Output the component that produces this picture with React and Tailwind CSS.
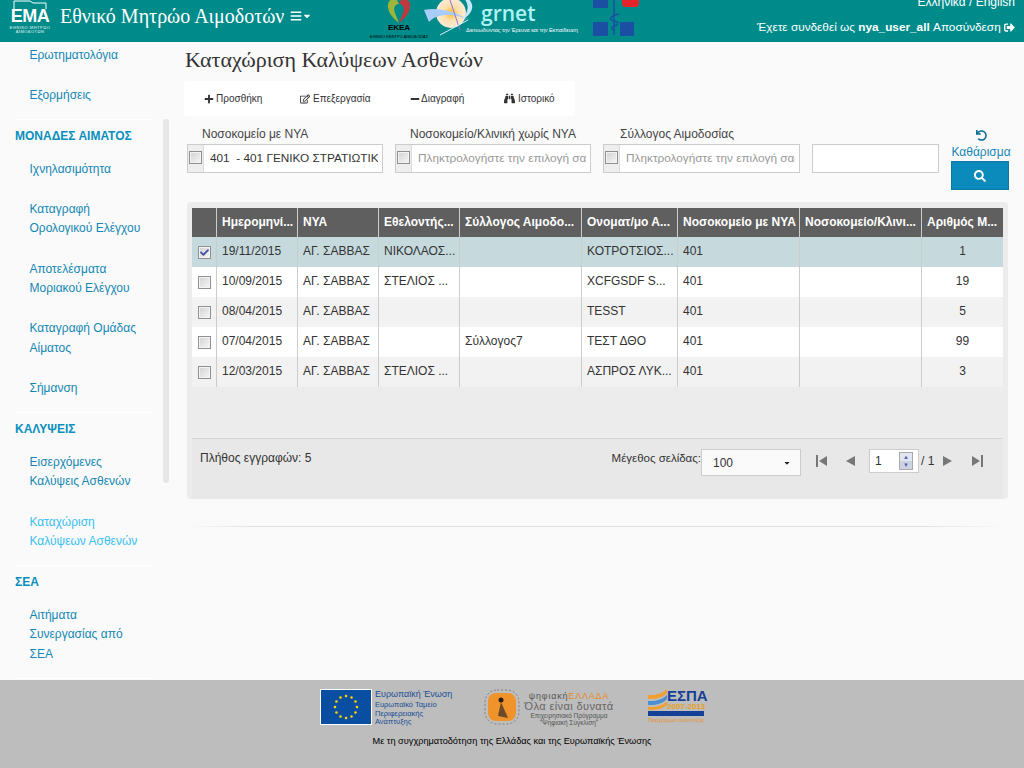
import { FaPlus, FaRegEdit, FaMinus, FaBinoculars, FaSearch, FaUndo, FaSignOutAlt, FaBars, FaCaretDown, FaCheck } from "react-icons/fa";

const COLS = [
  { w: "w-[81px]", label: "Ημερομηνί..." },
  { w: "w-[81px]", label: "ΝΥΑ" },
  { w: "w-[81px]", label: "Εθελοντής..." },
  { w: "w-[122px]", label: "Σύλλογος Αιμοδο..." },
  { w: "w-[96px]", label: "Ονοματ/μο Α..." },
  { w: "w-[122px]", label: "Νοσοκομείο με ΝΥΑ" },
  { w: "w-[122px]", label: "Νοσοκομείο/Κλινι..." },
  { w: "w-[81px]", label: "Αριθμός Μ..." },
];

const ROWS = [
  ["19/11/2015", "ΑΓ. ΣΑΒΒΑΣ", "ΝΙΚΟΛΑΟΣ...", "", "ΚΟΤΡΟΤΣΙΟΣ...", "401", "", "1"],
  ["10/09/2015", "ΑΓ. ΣΑΒΒΑΣ", "ΣΤΕΛΙΟΣ ...", "", "XCFGSDF S...", "401", "", "19"],
  ["08/04/2015", "ΑΓ. ΣΑΒΒΑΣ", "", "", "TESST", "401", "", "5"],
  ["07/04/2015", "ΑΓ. ΣΑΒΒΑΣ", "", "Σύλλογος7", "ΤΕΣΤ ΔΘΟ", "401", "", "99"],
  ["12/03/2015", "ΑΓ. ΣΑΒΒΑΣ", "ΣΤΕΛΙΟΣ ...", "", "ΑΣΠΡΟΣ ΛΥΚ...", "401", "", "3"],
];

const MENU = [
  { items: [["Ερωτηματολόγια"], ["Εξορμήσεις"]] },
  {
    title: "ΜΟΝΑΔΕΣ ΑΙΜΑΤΟΣ",
    items: [
      ["Ιχνηλασιμότητα"],
      ["Καταγραφή", "Ορολογικού Ελέγχου"],
      ["Αποτελέσματα", "Μοριακού Ελέγχου"],
      ["Καταγραφή Ομάδας", "Αίματος"],
      ["Σήμανση"],
    ],
  },
  {
    title: "ΚΑΛΥΨΕΙΣ",
    items: [
      ["Εισερχόμενες", "Καλύψεις Ασθενών"],
      ["Καταχώριση", "Καλύψεων Ασθενών"],
    ],
  },
  { title: "ΣΕΑ", items: [["Αιτήματα", "Συνεργασίας από", "ΣΕΑ"]] },
];

function Check({ on }) {
  return (
    <span className="flex h-[13px] w-[13px] items-center justify-center border border-[#8f8f8f] bg-gradient-to-br from-[#d2d2d2] to-[#f6f6f6] shadow-[inset_0_0_0_1px_#f4f4f4]">
      {on && <FaCheck className="text-[9px] text-[#3f4f9f]" />}
    </span>
  );
}

function Combo({ label, labelClass, width, value, placeholder }) {
  return (
    <div className={width}>
      <div className={`mb-[1px] h-[18px] text-[12px] leading-[18px] text-[#444] ${labelClass}`}>{label}</div>
      <div className="flex h-[29px] border border-[#ccc] bg-white">
        <div className="flex w-[16px] shrink-0 items-start justify-center border-r border-[#ddd] bg-[#eee] pt-[6px]">
          <Check />
        </div>
        <div className={`ml-[6px] mr-[4px] min-w-0 flex-1 overflow-hidden whitespace-pre text-[11.8px] leading-[27px] ${value ? "text-[#333]" : "text-[#999]"}`}>
          {value || placeholder}
        </div>
      </div>
    </div>
  );
}

function ToolButton({ icon, label, className }) {
  return (
    <div className={`flex items-center text-[10px] text-[#333] ${className}`}>
      {icon}
      <span>{label}</span>
    </div>
  );
}

function Sidebar() {
  return (
    <aside className="relative w-[170px] shrink-0 overflow-hidden pl-[15px] pt-[3.5px]">
      {MENU.map((section, i) => (
        <div key={i} className="w-[140px] border-b border-white pb-[3px] last:border-b-0">
          {section.title && (
            <div className="pt-[7px] pb-[3px] text-[12px] font-bold leading-[19.5px] text-[#0a8fbd]">{section.title}</div>
          )}
          {section.items.map((lines, j) => {
            const active = lines[0] === "Καταχώριση";
            return (
              <div
                key={j}
                className={`${i === 0 && j === 0 ? "pt-0" : "pt-[10px]"} pb-[10.75px] pl-[14.5px] text-[12px] leading-[19.5px] ${active ? "text-[#38c0f0]" : "text-[#1487b4]"}`}
              >
                {lines.map((l) => (
                  <div key={l} className="whitespace-nowrap">{l}</div>
                ))}
              </div>
            );
          })}
        </div>
      ))}
      <div className="absolute left-[163px] top-[77px] h-[364px] w-[6px] rounded-sm bg-[#e6e6e6]" />
    </aside>
  );
}

function EmaLogo() {
  return (
    <div className="mr-[13px] flex w-[34px] shrink-0 flex-col items-center text-white">
      <svg width="34" height="9" viewBox="0 0 34 9" className="shrink-0">
        <path d="M1 9 V1 H17 L20 3 H33 V9" stroke="#fff" strokeWidth="1" fill="none" />
      </svg>
      <div className="text-[18px] font-bold leading-[14px] tracking-[-0.5px]">ΕΜΑ</div>
      <div className="mt-[3px] whitespace-nowrap text-[4px] leading-[4px] tracking-[0.5px] text-white/90">ΕΘΝΙΚΟ ΜΗΤΡΩΟ</div>
      <div className="whitespace-nowrap text-[4px] leading-[4px] tracking-[0.5px] text-white/90">ΑΙΜΟΔΟΤΩΝ</div>
    </div>
  );
}

function EkeaLogo() {
  return (
    <div className="flex w-[44px] shrink-0 flex-col items-center">
      <svg width="26" height="26" viewBox="0 0 26 26" className="-mt-[2px] shrink-0">
        <path d="M13 25 C5 19 1 12 2 6 C3 1 8 0 11 2 L13 6 C9 6 7 10 9 15 Z" fill="#9db53a" />
        <path d="M13 25 C21 19 25 12 24 6 C23 1 18 0 15 2 L13 6 C17 6 19 10 17 15 Z" fill="#c0393f" />
      </svg>
      <div className="mt-[-1px] text-[8px] font-bold leading-[10px] text-black">ΕΚΕΑ</div>
      <div className="mt-[1px] whitespace-nowrap text-[4px] leading-[5px] text-black">ΕΘΝΙΚΟ ΚΕΝΤΡΟ ΑΙΜΟΔΟΣΙΑΣ</div>
    </div>
  );
}

function GrnetLogo() {
  return (
    <div className="ml-[3px] flex w-[169px] shrink-0">
      <svg width="54" height="36" viewBox="0 0 54 36" className="shrink-0">
        <defs>
          <radialGradient id="sun">
            <stop offset="0" stopColor="#f9b92c" />
            <stop offset="0.5" stopColor="#fde0b0" />
            <stop offset="1" stopColor="#fdebd7" />
          </radialGradient>
        </defs>
        <circle cx="27" cy="13" r="15" fill="url(#sun)" />
        <path d="M0 10 C12 7 28 10 46 20 C32 14 14 12 5 22 Z" fill="#a9cdfa" />
        <path d="M44 -2 C52 6 48 14 38 20 C44 12 46 6 40 -2 Z" fill="#c5e8fb" />
        <path d="M26 0 L36 30" stroke="#8a78d8" strokeWidth="1" />
        <path d="M16 35 L44 20" stroke="#d8f3f7" strokeWidth="1" />
      </svg>
      <div className="ml-[3px] min-w-0">
        <div className="h-[25px] font-['Open_Sans',sans-serif] text-[21px] font-semibold leading-[27px] text-[#aef3f3]">grnet</div>
        <div className="-ml-[15px] mt-[2px] whitespace-nowrap text-[5.4px] leading-[6px] text-white">Δικτυωδώντας την Έρευνα και την Εκπαίδευση</div>
      </div>
    </div>
  );
}

function MinistryLogo() {
  return (
    <svg width="46" height="36" viewBox="0 0 46 36" className="shrink-0">
      <rect x="0" y="0" width="15" height="8" fill="#1a4fa3" />
      <rect x="0" y="22" width="15" height="14" fill="#1a4fa3" />
      <rect x="27" y="22" width="14" height="14" fill="#1a4fa3" />
      <rect x="29" y="-4" width="17" height="11" rx="4" fill="#e5232b" />
      <path d="M21 0 V35" stroke="#1a4fa3" strokeWidth="1.5" />
      <path d="M26 14 C16 16 16 20 21 21 C26 22 26 25 21 26 C18 27 18 29 21 30" stroke="#1a4fa3" strokeWidth="1.5" fill="none" />
    </svg>
  );
}

function Header() {
  return (
    <header className="flex h-[42px] shrink-0 overflow-hidden bg-[#008b8b] text-white">
      <div className="flex w-[377px] shrink-0 pl-[13px]">
        <EmaLogo />
        <div className="flex h-[32px] items-center whitespace-nowrap font-['Liberation_Serif',serif] text-[20px]">
          Εθνικό Μητρώο Αιμοδοτών
          <FaBars className="ml-[6px] text-[12px]" />
          <FaCaretDown className="text-[10px]" />
        </div>
      </div>
      <div className="flex w-[262px] shrink-0">
        <EkeaLogo />
        <GrnetLogo />
        <MinistryLogo />
      </div>
      <div className="min-w-0 flex-1 pr-[9px] text-right text-[12px]">
        <div className="-mt-[7px] h-[25px] leading-[18px]">Ελληνικά / English</div>
        <div className="flex items-center justify-end whitespace-nowrap text-[11.8px] leading-[18px]">
          <span>Έχετε συνδεθεί ως&nbsp;<b>nya_user_all</b>&nbsp;Αποσύνδεση&nbsp;</span>
          <FaSignOutAlt className="text-[11px]" />
        </div>
      </div>
    </header>
  );
}

function Grid() {
  return (
    <div className="ml-[5px] w-[811px]">
      <div className="flex h-[29px] bg-[#5f5f5f] text-[12px] font-bold text-white">
        <div className="w-[25px] shrink-0 border-r border-[#ccc]" />
        {COLS.map((c, i) => (
          <div key={i} className={`${c.w} shrink-0 overflow-hidden whitespace-nowrap border-r border-[#ccc] pl-[5px] leading-[29px] last:border-r-0`}>
            {c.label}
          </div>
        ))}
      </div>
      {ROWS.map((row, r) => (
        <div key={r} className={`flex h-[30px] text-[12px] text-[#333] ${r === 0 ? "bg-[#c6dade]" : r % 2 ? "bg-white" : "bg-[#f2f2f2]"}`}>
          <div className="flex w-[25px] shrink-0 items-center justify-center border-r border-[#ccc] pt-[1px]">
            <Check on={r === 0} />
          </div>
          {row.map((cell, i) => (
            <div
              key={i}
              className={`${COLS[i].w} shrink-0 overflow-hidden whitespace-nowrap border-r border-[#ccc] leading-[28px] last:border-r-0 ${i === 7 ? "text-center" : "pl-[5px]"}`}
            >
              {cell}
            </div>
          ))}
        </div>
      ))}
    </div>
  );
}

function PagerIcon({ points, bar, width, className }) {
  return (
    <svg width={width} height="12" viewBox={`0 0 ${width} 12`} className={`mt-[6px] shrink-0 ${className}`}>
      <polygon points={points} fill="#777" />
      {bar !== undefined && <rect x={bar} y="0" width="2" height="12" fill="#777" />}
    </svg>
  );
}

function Pager() {
  return (
    <div className="mx-[5px] mt-[51px] flex h-[61px] border-t border-[#d4d4d4] bg-[#e8e8e8] text-[12px] text-[#333]">
      <div className="pl-[8px] pt-[10px] leading-[18px]">Πλήθος εγγραφών: 5</div>
      <div className="ml-auto flex items-start pr-[20px] pt-[10px]">
        <span className="whitespace-nowrap text-[11.5px] leading-[18px]">Μέγεθος σελίδας:</span>
        <div className="flex h-[27px] w-[100px] items-center justify-between border border-[#ccc] bg-[#fafafa] pl-[11px] pr-[9px]">
          100
          <FaCaretDown className="text-[8px] text-[#222]" />
        </div>
        <PagerIcon width={11} bar={0} points="11,1 3,6 11,11" className="ml-[15px]" />
        <PagerIcon width={9} points="9,1 0,6 9,11" className="ml-[19px]" />
        <div className="ml-[14px] flex h-[24px] w-[50px] items-center justify-between border border-[#ccc] bg-white pl-[5px] pr-[5px]">
          1
          <div className="flex h-[18px] w-[14px] flex-col border border-[#a9a9a9]">
            <div className="flex flex-1 items-center justify-center bg-[#e2e6ee] text-[6px] leading-none text-[#5563b0]">▲</div>
            <div className="flex flex-1 items-center justify-center bg-[#cdd3e0] text-[6px] leading-none text-[#5563b0]">▼</div>
          </div>
        </div>
        <span className="ml-[2px] w-[14px] whitespace-nowrap leading-[24px]">/ 1</span>
        <PagerIcon width={9} points="0,1 9,6 0,11" className="ml-[8px]" />
        <PagerIcon width={11} bar={9} points="0,1 8,6 0,11" className="ml-[20px]" />
      </div>
    </div>
  );
}

function Main() {
  return (
    <main className="min-w-0 flex-1 pl-[15px]">
      <h1 className="mt-[4px] h-[35px] font-['Liberation_Serif',serif] text-[22px] font-normal leading-[28px] text-[#333]">
        Καταχώριση Καλύψεων Ασθενών
      </h1>
      <div className="-ml-[1px] flex h-[35px] w-[391px] items-center rounded-sm bg-white">
        <ToolButton icon={<FaPlus className="text-[10px]" />} label="Προσθήκη" className="ml-[20px] w-[96px] gap-[2px]" />
        <ToolButton icon={<FaRegEdit className="text-[10px]" />} label="Επεξεργασία" className="w-[110px] gap-[3px]" />
        <ToolButton icon={<FaMinus className="text-[10px]" />} label="Διαγραφή" className="w-[94px] gap-[1px]" />
        <ToolButton icon={<FaBinoculars className="text-[11px]" />} label="Ιστορικό" className="gap-[3px]" />
      </div>
      <div className="mt-[9px] flex h-[77px] items-start">
        <div className="flex">
          <Combo label="Νοσοκομείο με ΝΥΑ" labelClass="pl-[15px]" width="ml-[2px] w-[196px]" value="401  - 401 ΓΕΝΙΚΟ ΣΤΡΑΤΙΩΤΙΚΟ ΝΟΣΟΚΟΜΕΙΟ" />
          <Combo label="Νοσοκομείο/Κλινική χωρίς ΝΥΑ" labelClass="pl-[15px]" width="ml-[12px] w-[196px]" placeholder="Πληκτρολογήστε την επιλογή σας" />
          <Combo label="Σύλλογος Αιμοδοσίας" labelClass="pl-[17px]" width="ml-[12px] w-[197px]" placeholder="Πληκτρολογήστε την επιλογή σας" />
          <div className="ml-[12px] mt-[19px] h-[29px] w-[127px] border border-[#ccc] bg-white" />
        </div>
        <div className="ml-[12px] flex w-[60px] flex-col items-center">
          <FaUndo className="mt-[5px] text-[11px] text-[#0a6f96]" />
          <div className="mt-[2px] text-[12px] leading-[18px] text-[#1487b4]">Καθάρισμα</div>
          <div className="flex h-[29px] w-[58px] items-center justify-center self-start border border-[#0a7aa5] bg-[#0a8bbb] text-white">
            <FaSearch className="text-[12px]" />
          </div>
        </div>
      </div>
      <section className="ml-[2px] h-[297px] w-[821px] rounded-[4px] bg-[#ececec] pt-[6px]">
        <Grid />
        <Pager />
      </section>
      <div className="mt-[27px] h-[1px] w-[823px] bg-[linear-gradient(to_right,transparent,#e2e2e2_8%,#e2e2e2_90%,transparent)]" />
    </main>
  );
}

function Footer() {
  return (
    <footer className="flex h-[88px] shrink-0 flex-col items-center bg-[#bdbdbd] pt-[9px]">
      <div className="flex h-[36px] w-[384px] items-start">
        <div className="flex h-[36px] w-[52px] shrink-0 items-center justify-center border border-white bg-[#0a4ea2]">
          <svg width="30" height="30" viewBox="0 0 30 30">
            {[0, 30, 60, 90, 120, 150, 180, 210, 240, 270, 300, 330].map((a) => (
              <circle
                key={a}
                cx={15 + 11 * Math.cos((a * Math.PI) / 180)}
                cy={15 + 11 * Math.sin((a * Math.PI) / 180)}
                r="1.3"
                fill="#ffd400"
              />
            ))}
          </svg>
        </div>
        <div className="ml-[3px] w-[85px] shrink-0 text-[#1a4f95]">
          <div className="whitespace-nowrap text-[9px] leading-[11px]">Ευρωπαϊκή Ένωση</div>
          <div className="mt-[1px] whitespace-nowrap text-[7.5px] leading-[8.5px]">Ευρωπαϊκό Ταμείο<br />Περιφερειακής<br />Ανάπτυξης</div>
        </div>
        <svg width="38" height="36" viewBox="0 0 38 36" className="ml-[24px] shrink-0">
          <rect x="1" y="1" width="34" height="34" rx="12" fill="none" stroke="#666" strokeWidth="0.7" strokeDasharray="2 2" />
          <rect x="4" y="4" width="28" height="28" rx="8" fill="#f0932b" />
          <circle cx="17" cy="11" r="2.5" fill="#2a2018" />
          <path d="M17 13 L14 27 L24 29 Z" fill="#6b4a2a" />
        </svg>
        <div className="-ml-[2px] w-[98px] shrink-0 pt-[2px] text-center text-[#555]">
          <div className="whitespace-nowrap text-[9px] leading-[10px] tracking-[0.8px]">ψηφιακή<span className="text-[#e58a1f]">ΕΛΛΑΔΑ</span></div>
          <div className="whitespace-nowrap text-[11px] leading-[11px] tracking-[0.4px] text-[#666]">Όλα είναι δυνατά</div>
          <div className="whitespace-nowrap text-[6.5px] leading-[7px]">Επιχειρησιακό Πρόγραμμα<br />"Ψηφιακή Σύγκλιση"</div>
        </div>
        <div className="ml-[30px] flex w-[56px] shrink-0 flex-wrap">
          <svg width="19" height="21" viewBox="0 0 19 21" className="shrink-0">
            <path d="M0 6 C6 6 13 6 19 0 V4 C13 10 6 10 0 10 Z" fill="#f0a030" />
            <path d="M0 12 C6 12 13 12 19 6 V10 C13 16 6 16 0 16 Z" fill="#4a8fd0" />
            <path d="M0 18 C6 18 13 18 19 12 V16 C13 21 6 21 0 21 Z" fill="#f0a030" />
          </svg>
          <div className="w-[37px] text-center text-[#163f96]">
            <div className="text-[15px] font-bold leading-[13px]">ΕΣΠΑ</div>
            <div className="whitespace-nowrap text-[8px] font-bold leading-[9px] text-[#e8a020]">2007-2013</div>
          </div>
          <div className="h-[5px] w-full bg-[#163f96]" />
          <div className="whitespace-nowrap text-[5.5px] leading-[8px] text-[#e8902a]">Πρόγραμμα ανάπτυξης</div>
        </div>
      </div>
      <div className="mt-[9px] text-[9.2px] leading-[14px] text-black">Με τη συγχρηματοδότηση της Ελλάδας και της Ευρωπαϊκής Ένωσης</div>
    </footer>
  );
}

export default function App() {
  return (
    <div className="flex h-screen flex-col overflow-hidden bg-[#fafafa] font-['Liberation_Sans',Arial,sans-serif]">
      <Header />
      <div className="flex min-h-0 flex-1">
        <Sidebar />
        <Main />
      </div>
      <Footer />
    </div>
  );
}
